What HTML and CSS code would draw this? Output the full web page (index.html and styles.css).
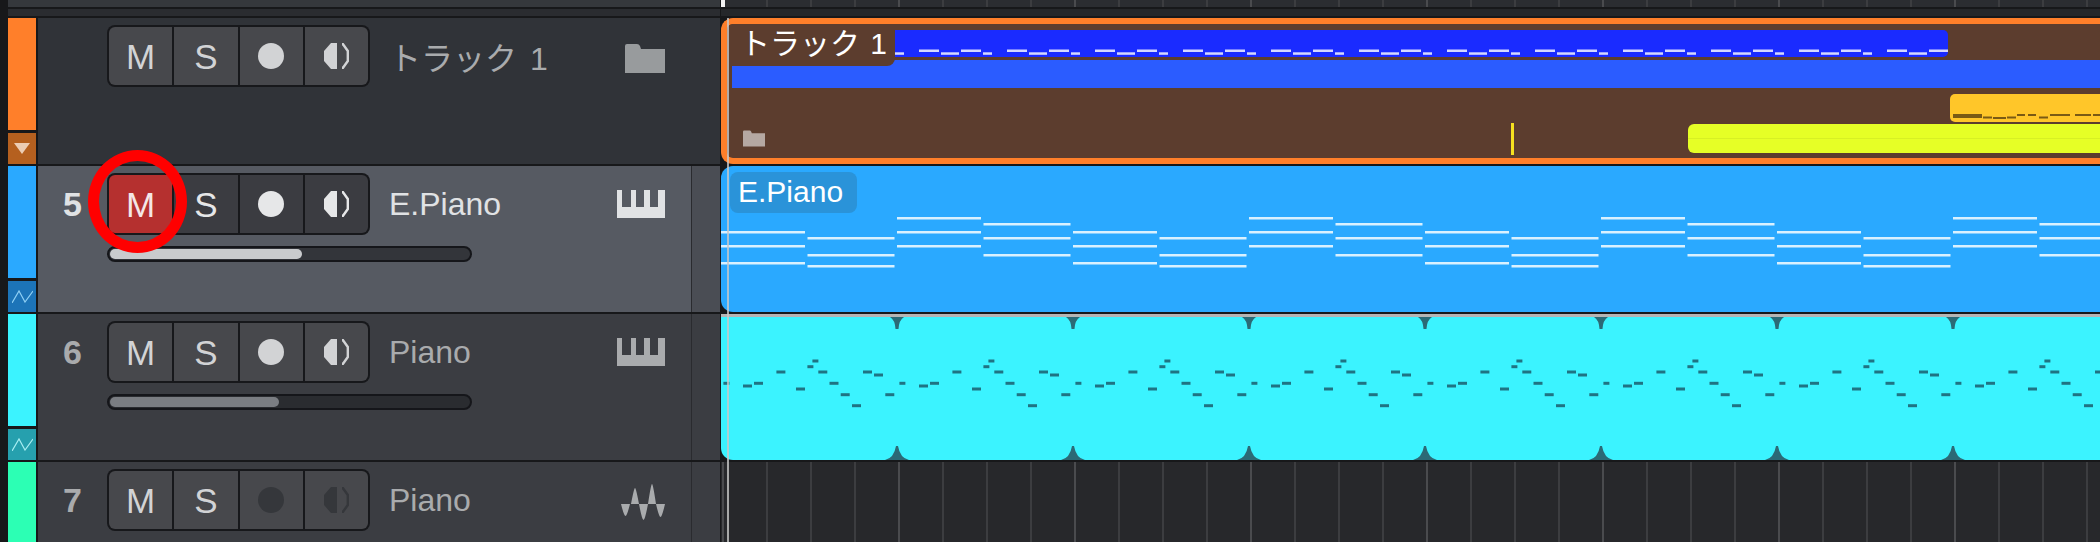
FILE: index.html
```html
<!DOCTYPE html>
<html lang="ja">

<head>
    <meta charset="UTF-8">
    <meta name="viewport" content="width=device-width, initial-scale=1.0">
    <title>Tracks</title>

    <link rel="stylesheet" href="styles.css">
</head>

<body>
    <svg class="defs" width="0" height="0">
        <symbol id="mon" viewBox="0 0 25 26">
            <path d="M13 0H7L0 8V18L7 26H13Z" fill="currentColor" />
            <path d="M18 1.2H19L23.8 8V18L19 24.8H18" fill="none" stroke="currentColor" stroke-width="2.4" />
        </symbol>
        <symbol id="folder" viewBox="0 0 40 29">
            <path d="M0 29V2Q0 0 2 0H12Q14 0 15 2L16 5H40V29Z" fill="currentColor" />
        </symbol>
        <symbol id="keys" viewBox="0 0 48 28">
            <path d="M0 0H5V17H14V0H19V17H27V0H33V17H41V0H48V28H0Z" fill="currentColor" />
        </symbol>
        <symbol id="wave" viewBox="0 0 44 36">
            <path d="M0 20H9Q6 32 4.5 32Q3 32 0 20ZM10 20Q13 4 14 4Q15 4 18 20ZM18 20H27Q24 36 22.500 36Q21 36 18 20ZM27 20Q30 0 31 0Q32 0 35 20ZM35 20H44Q41 33 39.500 33Q38 33 35 20Z" fill="currentColor" />
        </symbol>
        <symbol id="auto" viewBox="0 0 21 13">
            <path d="M0 13L7 1L13 12L21 1" fill="none" stroke="currentColor" stroke-width="1.2" />
        </symbol>

        <!-- repeating note patterns -->
        <pattern id="blue-notes" patternUnits="userSpaceOnUse" x="16" y="0" width="88" height="27" fill="#d5d8ff">
            <rect x="0" y="19.500" width="20" height="2.500" />
            <rect x="22" y="22.300" width="18" height="2.500" />
            <rect x="42" y="19.500" width="20" height="2.500" />
            <rect x="64" y="22.300" width="9" height="2.500" />
        </pattern>
        <pattern id="chords" patternUnits="userSpaceOnUse" x="0" y="0" width="352" height="146" fill="#d9f1ff">
            <rect x="0" y="65" width="84" height="2.500" />
            <rect x="0" y="79" width="84" height="2.500" />
            <rect x="0" y="96" width="84" height="2.500" />
            <rect x="86.500" y="71" width="87" height="2.500" />
            <rect x="86.500" y="88" width="87" height="2.500" />
            <rect x="86.500" y="99" width="87" height="2.500" />
            <rect x="176" y="51" width="84" height="2.500" />
            <rect x="176" y="65" width="84" height="2.500" />
            <rect x="176" y="79" width="84" height="2.500" />
            <rect x="262.500" y="57" width="87" height="2.500" />
            <rect x="262.500" y="71" width="87" height="2.500" />
            <rect x="262.500" y="88" width="87" height="2.500" />
        </pattern>
        <pattern id="melody" patternUnits="userSpaceOnUse" x="1" y="0" width="176" height="143" fill="#1f7383">
            <rect x="1.400" y="64.800" width="6" height="3" />
            <rect x="21" y="67.500" width="9" height="3" />
            <rect x="32" y="64.800" width="9" height="3" />
            <rect x="54.400" y="53.500" width="9" height="3" />
            <rect x="74" y="70.500" width="9" height="3" />
            <rect x="85.400" y="48.200" width="6" height="3" />
            <rect x="90.400" y="42.500" width="6" height="3" />
            <rect x="96.300" y="53.500" width="9" height="3" />
            <rect x="107.500" y="64.800" width="9" height="3" />
            <rect x="118.700" y="76.200" width="9" height="3" />
            <rect x="130" y="87.200" width="9" height="3" />
            <rect x="141" y="53.500" width="9" height="3" />
            <rect x="152" y="56.500" width="9" height="3" />
            <rect x="163.300" y="76.200" width="9" height="3" />
        </pattern>
        <pattern id="splits" patternUnits="userSpaceOnUse" x="88" y="0" width="176" height="143" fill="#2b6a76">
            <path d="M81 0H95Q90 3 89.500 12H86.500Q86 3 81 0Z" />
            <path d="M76 143Q85 141 87 129H89Q91 141 100 143Z" />
        </pattern>
    </svg>

    <main class="app">
        <div class="bar">
            <div class="bar-head"></div>
            <div class="bar-lane grid"></div>
        </div>
        <div class="bar bar-sub">
            <div class="bar-head"></div>
            <div class="bar-lane"></div>
        </div>

        <!-- folder track -->
        <section class="row row-folder">
            <div class="strip">
                <div class="strip-main"></div>
                <div class="strip-fold"><span class="fold-arrow"></span></div>
            </div>
            <div class="head">
                <div class="head-main">
                    <div class="head-top">
                        <span class="num"></span>
                        <div class="btns">
                            <span class="btn">M</span>
                            <span class="btn">S</span>
                            <span class="btn"><i class="dot"></i></span>
                            <span class="btn"><svg class="mon"><use href="#mon" /></svg></span>
                        </div>
                        <span class="name">トラック 1</span>
                        <svg class="icon icon-folder"><use href="#folder" /></svg>
                    </div>
                </div>
            </div>
            <div class="lane lane-folder">
                <div class="clip clip-notes">
                    <svg width="100%" height="100%"><rect width="100%" height="100%" fill="url(#blue-notes)" /></svg>
                </div>
                <div class="clip clip-band"></div>
                <div class="clip clip-amber">
                    <svg width="100%" height="100%">
                        <rect x="3" y="20" width="29" height="4" />
                        <rect x="33" y="22.500" width="9" height="2" />
                        <rect x="43" y="23" width="13" height="2" />
                        <rect x="57" y="22.500" width="9" height="2" />
                        <rect x="67" y="20" width="8" height="2" />
                        <rect x="78" y="20" width="8" height="2" />
                        <rect x="89" y="22.500" width="9" height="2" />
                        <rect x="100" y="20" width="20" height="2" />
                        <rect x="125" y="20" width="16" height="2" />
                        <rect x="143" y="20" width="7" height="2" />
                    </svg>
                </div>
                <div class="clip clip-lime"></div>
                <div class="clip clip-tick"></div>
                <svg class="clip clip-folder"><use href="#folder" /></svg>
                <div class="clip-label folder-label">トラック 1</div>
            </div>
        </section>

        <!-- E.Piano, selected -->
        <section class="row row-sel">
            <div class="strip">
                <div class="strip-main"></div>
                <div class="strip-fold"><svg class="auto"><use href="#auto" /></svg></div>
            </div>
            <div class="head">
                <div class="head-main">
                    <div class="head-top">
                        <span class="num">5</span>
                        <div class="btns">
                            <span class="btn btn-on">M</span>
                            <span class="btn">S</span>
                            <span class="btn"><i class="dot"></i></span>
                            <span class="btn"><svg class="mon"><use href="#mon" /></svg></span>
                        </div>
                        <span class="name">E.Piano</span>
                        <svg class="icon icon-keys"><use href="#keys" /></svg>
                    </div>
                    <div class="fader"><div class="fader-fill" style="width: 53.6%"></div></div>
                </div>
                <div class="head-side"></div>
            </div>
            <div class="lane lane-epiano">
                <svg class="fill" width="100%" height="100%"><rect width="100%" height="100%" fill="url(#chords)" /></svg>
                <div class="clip-label epiano-label">E.Piano</div>
            </div>
        </section>

        <section class="row row-piano">
            <div class="strip">
                <div class="strip-main"></div>
                <div class="strip-fold"><svg class="auto"><use href="#auto" /></svg></div>
            </div>
            <div class="head">
                <div class="head-main">
                    <div class="head-top">
                        <span class="num">6</span>
                        <div class="btns">
                            <span class="btn">M</span>
                            <span class="btn">S</span>
                            <span class="btn"><i class="dot"></i></span>
                            <span class="btn"><svg class="mon"><use href="#mon" /></svg></span>
                        </div>
                        <span class="name">Piano</span>
                        <svg class="icon icon-keys"><use href="#keys" /></svg>
                    </div>
                    <div class="fader"><div class="fader-fill" style="width: 47.200%"></div></div>
                </div>
                <div class="head-side"></div>
            </div>
            <div class="lane lane-piano">
                <svg class="fill" width="100%" height="100%">
                    <rect width="100%" height="100%" fill="url(#melody)" />
                    <rect x="100" width="1279" height="100%" fill="url(#splits)" />
                </svg>
            </div>
        </section>

        <section class="row row-audio">
            <div class="strip">
                <div class="strip-main"></div>
            </div>
            <div class="head">
                <div class="head-main">
                    <div class="head-top">
                        <span class="num">7</span>
                        <div class="btns">
                            <span class="btn">M</span>
                            <span class="btn">S</span>
                            <span class="btn"><i class="dot"></i></span>
                            <span class="btn"><svg class="mon"><use href="#mon" /></svg></span>
                        </div>
                        <span class="name">Piano</span>
                        <svg class="icon icon-wave"><use href="#wave" /></svg>
                    </div>
                </div>
                <div class="head-side"></div>
            </div>
            <div class="lane lane-empty grid"></div>
        </section>

        <div class="playhead"></div>
        <div class="playhead-top"></div>
        <div class="callout"></div>
    </main>
</body>

</html>
```

FILE: styles.css
```css
html,
body {
    margin: 0;
    height: 100%;
    overflow: hidden;
}

body {
    background: #17181a;
    font-family: "Liberation Sans", "Noto Sans CJK JP", sans-serif;
}

.defs {
    position: absolute;
}

.app {
    position: relative;
    height: 542px;
    padding-left: 8px;
    box-sizing: border-box;
    overflow: hidden;
}

/* top bars */

.bar {
    display: flex;
    height: 7px;
    margin-bottom: 2px;
}

.bar-head {
    width: 712px;
    background: #35383c;
}

.bar-lane {
    flex: 1;
    margin-left: 1px;
    background-color: #2b2d31;
}

.bar-sub .bar-head {
    background: #2a2c30;
}

.bar-sub .bar-lane {
    background: #25272a;
}

.grid {
    background-image:
        linear-gradient(90deg, #4a4b4e 2px, transparent 2px),
        linear-gradient(90deg, #3c3d40 2px, transparent 2px);
    background-size: 176px 100%, 44px 100%;
    background-position: 1px 0, 1px 0;
}

/* rows */

.row {
    display: flex;
    height: 146px;
    margin-bottom: 2px;
}

.row-audio {
    height: 80px;
    margin-bottom: 0;
}

.strip {
    width: 28px;
    flex: none;
    display: flex;
    flex-direction: column;
    gap: 3px;
    margin-right: 2px;
}

.strip-main {
    flex: 1;
}

.strip-fold {
    height: 31px;
    display: flex;
    align-items: center;
    justify-content: center;
}

.fold-arrow {
    width: 0;
    height: 0;
    border-left: 8px solid transparent;
    border-right: 8px solid transparent;
    border-top: 11px solid #eccdb4;
}

.auto {
    width: 21px;
    height: 13px;
}

.row-folder .strip-main { background: #ff7f2a; }
.row-folder .strip-fold { background: #b5601f; }

.row-sel .strip-main { background: #2aa9ff; }
.row-sel .strip-fold { background: #1c74b8; color: #8fd0f5; }

.row-piano .strip-main { background: #3bf3ff; }
.row-piano .strip-fold { background: #26a0ae; color: #a8eef2; }

.row-audio .strip-main { background: #2cffb4; }

/* track header */

.head {
    width: 682px;
    flex: none;
    display: flex;
    background: #3b3d42;
    color: #a9abad;
}

.head-main {
    flex: 1;
    padding: 7px 26px 0 0;
}

.head-side {
    width: 28px;
    margin-left: 1px;
    background: #3b3d42;
    box-shadow: -1px 0 0 #2a2b2f;
}

.row-folder .head {
    background: #303338;
}

.row-folder .head-main {
    padding-right: 55px;
}

.row-sel .head {
    background: #565a62;
    color: #e0e2e4;
}

.row-sel .head-side {
    background: #4a4d54;
}

.head-top {
    display: flex;
    align-items: center;
}

.num {
    width: 69px;
    flex: none;
    box-sizing: border-box;
    padding-left: 25px;
    font-size: 34px;
    font-weight: bold;
}

.btns {
    display: flex;
    gap: 2px;
    width: 263px;
    height: 62px;
    box-sizing: border-box;
    padding: 2px;
    border-radius: 8px;
    background: #17181b;
}

.btn {
    flex: 1;
    display: flex;
    align-items: center;
    justify-content: center;
    background: #47484c;
    color: #d2d3d5;
    font-size: 35px;
    line-height: 1;
}

.btn:first-child {
    border-radius: 6px 0 0 6px;
}

.btn:last-child {
    border-radius: 0 6px 6px 0;
}

.row-sel .btn {
    background: #3b3c41;
    color: #e6e7e8;
}

.row-sel .btn-on {
    background: #b5302f;
    color: #f4e6e6;
}

.dot {
    width: 26px;
    height: 26px;
    border-radius: 50%;
    background: currentColor;
}

.mon {
    width: 25px;
    height: 26px;
}

.row-audio .btn:nth-child(n+3) {
    color: #35373b;
}

.name {
    margin-left: 19px;
    font-size: 32px;
    word-spacing: 4px;
    white-space: nowrap;
}

.icon {
    margin-left: auto;
}

.icon-folder {
    width: 40px;
    height: 29px;
    margin-top: 4px;
    color: #989b9d;
}

.icon-keys {
    width: 48px;
    height: 28px;
}

.icon-wave {
    width: 44px;
    height: 36px;
    margin-top: 4px;
}

.fader {
    width: 365px;
    height: 16px;
    box-sizing: border-box;
    margin: 11px 0 0 69px;
    padding: 1px;
    border: 2px solid #15161a;
    border-radius: 8px;
    background: #2a2c30;
}

.fader-fill {
    height: 100%;
    border-radius: 6px;
    background: #7a7d82;
}

.row-sel .fader {
    background: #33353a;
}

.row-sel .fader-fill {
    background: #c9cbcd;
}

/* arrange lanes */

.lane {
    position: relative;
    flex: 1;
    margin-left: 1px;
    overflow: hidden;
}

.fill {
    display: block;
}

.lane-folder {
    box-sizing: border-box;
    border: 6px solid #ff7f2a;
    border-right: 0;
    border-radius: 12px 0 0 12px;
    background: #5c3d2e;
}

.clip {
    position: absolute;
}

.clip-label {
    position: absolute;
    color: #fff;
    font-size: 30px;
    line-height: 1;
    word-spacing: 2px;
}

.folder-label {
    left: 0;
    top: 0;
    width: 168px;
    height: 42px;
    box-sizing: border-box;
    padding: 5px 0 0 13px;
    border-radius: 0 0 8px 0;
    background: #5c3d2e;
}

.clip-notes {
    left: 0;
    top: 6px;
    width: 1221px;
    height: 27px;
    border-radius: 0 5px 5px 0;
    background: #1a2bff;
}

.clip-band {
    left: 5px;
    right: 0;
    top: 36px;
    height: 28px;
    background: #2b5cff;
}

.clip-amber {
    left: 1223px;
    right: 0;
    top: 70px;
    height: 28px;
    border-radius: 5px 0 0 5px;
    background: #ffc629;
    fill: #7a5a14;
}

.clip-lime {
    left: 961px;
    right: 0;
    top: 100px;
    height: 29px;
    border-radius: 6px 0 0 6px;
    background: linear-gradient(#e6ff26 48%, #d8f024 48%, #d8f024 52%, #e6ff26 52%);
}

.clip-tick {
    left: 784px;
    top: 99px;
    width: 3px;
    height: 32px;
    background: #f5e020;
}

.clip-folder {
    left: 16px;
    top: 106px;
    width: 22px;
    height: 17px;
    color: #b5a8a2;
}

.lane-epiano {
    border-radius: 12px 0 0 12px;
    background: #2aa9ff;
}

.epiano-label {
    left: 9px;
    top: 6px;
    width: 127px;
    height: 41px;
    box-sizing: border-box;
    padding: 5px 0 0 8px;
    border-radius: 8px;
    background: #2a93d9;
}

.lane-piano {
    box-sizing: border-box;
    border-top: 3px solid #b5b5b5;
    border-radius: 0 0 0 12px;
    background: #3bf3ff;
}

.lane-empty {
    background-color: #27282b;
}

/* overlays */

.playhead {
    position: absolute;
    left: 727px;
    top: 18px;
    bottom: 0;
    width: 2px;
    background: rgba(200, 200, 200, 0.8);
}

.playhead-top {
    position: absolute;
    left: 721px;
    top: 0;
    width: 4px;
    height: 7px;
    background: #f2f2f2;
}

.callout {
    position: absolute;
    left: 88px;
    top: 150px;
    width: 99px;
    height: 103px;
    box-sizing: border-box;
    border: 11px solid #f00;
    border-radius: 50%;
}
```
